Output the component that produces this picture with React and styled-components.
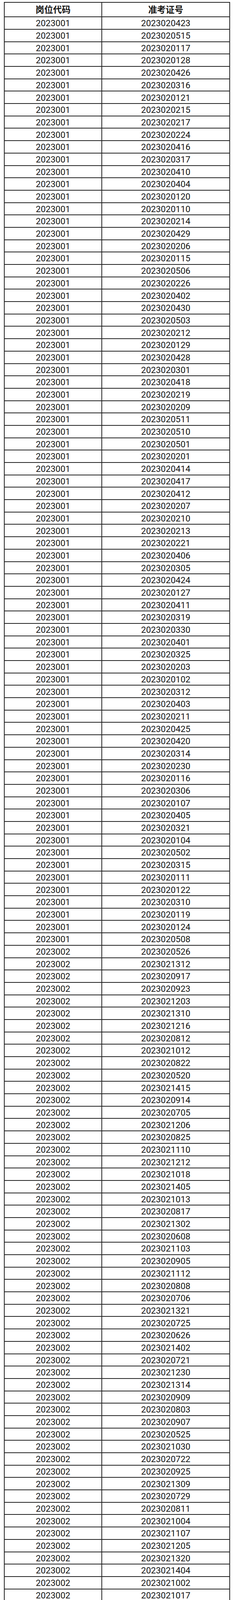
import React from "react";
import styled, { createGlobalStyle } from "styled-components";

const GlobalStyle = createGlobalStyle`
  html, body {
    margin: 0;
    padding: 0;
    background: #ffffff;
  }
  body {
    font-family: Roboto, "Noto Sans CJK SC", "Noto Sans", sans-serif;
    color: #151515;
  }
  * { box-sizing: border-box; }
`;

const Page = styled.div`
  padding: 5px 10px 0 10px;
  width: 600px;
`;

const Table = styled.div`
  width: 580px;
  border: 2px solid #222;
  border-bottom: none;
  display: flex;
  flex-direction: column;
`;

const Row = styled.div`
  display: grid;
  grid-template-columns: 250px 1fr;
  height: ${(p) => (p.$header ? "37.3px" : "31.7px")};
  border-bottom: 2px solid #222;
`;

const Cell = styled.div`
  display: flex;
  align-items: center;
  justify-content: center;
  font-size: 22.5px;
  line-height: 1;
  font-weight: ${(p) => (p.$header ? 700 : 400)};
  color: #151515;
  border-right: ${(p) => (p.$first ? "2px solid #222" : "none")};
  padding-top: 1px;
  overflow: hidden;
`;

const groups = [
  {
    code: "2023001",
    ids: "0423 0515 0117 0128 0426 0316 0121 0215 0217 0224 0416 0317 0410 0404 0120 0110 0214 0429 0206 0115 0506 0226 0402 0430 0503 0212 0129 0428 0301 0418 0219 0209 0511 0510 0501 0201 0414 0417 0412 0207 0210 0213 0221 0406 0305 0424 0127 0411 0319 0330 0401 0325 0203 0102 0312 0403 0211 0425 0420 0314 0230 0116 0306 0107 0405 0321 0104 0502 0315 0111 0122 0310 0119 0124 0508",
  },
  {
    code: "2023002",
    ids: "0526 1312 0917 0923 1203 1310 1216 0812 1012 0822 0520 1415 0914 0705 1206 0825 1110 1212 1018 1405 1013 0817 1302 0608 1103 0905 1112 0808 0706 1321 0725 0626 1402 0721 1230 1314 0909 0803 0907 0525 1030 0722 0925 1309 0729 0811 1004 1107 1205 1320 1404 1002 1017 0930 1011 0714 0826 1407 0704 1422 1326 0528 1412 0519 1129 1301 0916 1328 0703 1403 0522 1003 1410 1322 1019 1319 1306 0901 1010 0529 0728 1105 0618 0818 1420 0928 0605 0711 0517 1123",
  },
  {
    code: "2023003",
    ids: "2116 2114 2223 2426 1616 2306 1824 2028 1905 1928 2003 1528 2103 2115 2208 1904 1929 1530 1607 2512 1709 1827 1701 2201 2019 2006 1617",
  },
];

const rows = groups.flatMap((g) =>
  g.ids.split(" ").map((s) => ({ code: g.code, id: "202302" + s }))
);

export default function App() {
  return (
    <>
      <GlobalStyle />
      <Page>
        <Table>
          <Row $header>
            <Cell $header $first>岗位代码</Cell>
            <Cell $header>准考证号</Cell>
          </Row>
          {rows.map((r, i) => (
            <Row key={i}>
              <Cell $first>{r.code}</Cell>
              <Cell>{r.id}</Cell>
            </Row>
          ))}
        </Table>
      </Page>
    </>
  );
}
